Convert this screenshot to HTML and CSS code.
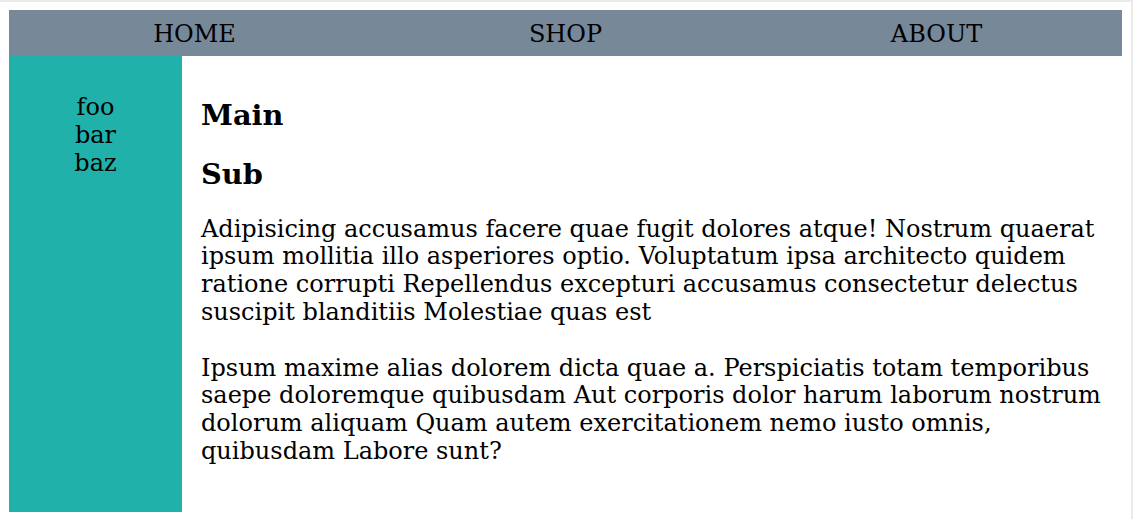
FILE: index.html
```html
<!DOCTYPE html>
<html>
<head>
<meta charset="utf-8">
<link rel="stylesheet" href="styles.css">
</head>
<body>
<div class="layout">
  <nav class="nav">
    <div class="nav-item">HOME</div>
    <div class="nav-item">SHOP</div>
    <div class="nav-item">ABOUT</div>
  </nav>
  <aside class="side">
    <div>foo</div>
    <div>bar</div>
    <div>baz</div>
  </aside>
  <main class="main">
    <h3 class="heading">Main</h3>
    <h3 class="heading">Sub</h3>
    <p class="para">Adipisicing accusamus facere quae fugit dolores atque! Nostrum quaerat ipsum mollitia illo asperiores optio. Voluptatum ipsa architecto quidem ratione corrupti Repellendus excepturi accusamus consectetur delectus suscipit blanditiis Molestiae quas est</p>
    <p class="para">Ipsum maxime alias dolorem dicta quae a. Perspiciatis totam temporibus saepe doloremque quibusdam Aut corporis dolor harum laborum nostrum dolorum aliquam Quam autem exercitationem nemo iusto omnis, quibusdam Labore sunt?</p>
  </main>
</div>
</body>
</html>
```
FILE: styles.css
```css
html {
  border-top: 2px solid #ebebeb;
  border-right: 2px solid #ebebeb;
  background: #fff;
}
body {
  margin: 8px 9px 7px 9px;
  font-family: "DejaVu Serif", serif;
  font-size: 24px;
  color: #000;
}
.layout {
  display: grid;
  grid-template-columns: 173px 1fr;
  grid-template-rows: 46px 1fr;
  height: calc(100vh - 17px);
}
.nav {
  grid-column: 1 / 3;
  display: grid;
  grid-template-columns: 1fr 1fr 1fr;
  align-items: center;
  padding-top: 2px;
  background: #778899;
}
.nav-item {
  text-align: center;
}
.side {
  background: #20b2aa;
  text-align: center;
  padding-top: 37px;
}
.main {
  padding: 42px 20px 0 19px;
}
.heading {
  font-size: 28.8px;
  margin: 0 0 24.5px;
}
.para {
  margin: 25px 0 28px;
  line-height: 27.8px;
}
.para + .para {
  margin-top: 0;
}
```
